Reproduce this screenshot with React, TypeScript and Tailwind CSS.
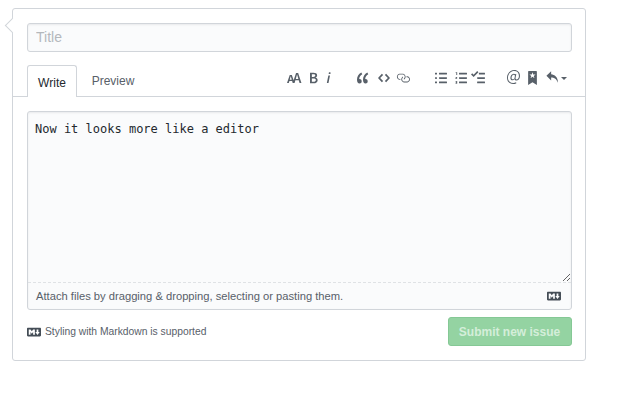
import React from "react";

const I = ({ d, vb, w, h, c = "#586069", stretch = false }: { d: string; vb: string; w: number; h: number; c?: string; stretch?: boolean }) => (
  <svg width={w} height={h} viewBox={vb} fill={c} className="shrink-0" preserveAspectRatio={stretch ? "none" : undefined}>
    <path fillRule="evenodd" d={d} />
  </svg>
);

const md = "M14.85 3H1.15C.52 3 0 3.52 0 4.15v7.69C0 12.48.52 13 1.15 13h13.69c.64 0 1.15-.52 1.15-1.15v-7.7C16 3.52 15.48 3 14.85 3zM9 11H7V8L5.5 9.92 4 8v3H2V5h2l1.5 2L7 5h2v6zm2.99.5L9.5 8H11V5h2v3h1.5l-2.51 3.5z";

export default function App() {
  return (
    <div className="bg-white w-[640px] h-[400px] pt-2 pl-3 font-['Liberation_Sans',Arial,sans-serif]">
      <div className="relative w-[574px] h-[353px] bg-white border border-[#d1d5da] rounded-[3px] flex flex-col">
        <div className="absolute left-[-6px] top-[11px] w-[11px] h-[11px] rotate-45 bg-white border-l border-b border-[#d1d5da]" />
        <div className="relative pl-[14px] pr-[13px] pt-[14px]">
          <input
            placeholder="Title"
            className="w-full h-[29px] px-2 pb-[2px] text-sm leading-5 bg-[#fafbfc] border border-[#d1d5da] rounded-[3px] text-[#24292e] placeholder:text-[#b4b8bc] outline-none shadow-[inset_0_1px_2px_rgba(27,31,35,0.075)]"
          />
        </div>
        <div className="relative mt-[13px] h-[32px] pl-[14px] flex items-end border-b border-[#d1d5da]">
          <div className="shrink-0 w-[50px] h-[32px] mb-[-1px] pt-[2px] bg-white border border-[#d1d5da] border-b-0 rounded-t-[3px] flex items-center justify-center text-[12px] text-[#24292e] z-10">
            Write
          </div>
          <div className="shrink-0 w-[72px] h-[32px] pt-[2px] flex items-center justify-center text-[12px] text-[#586069]">
            Preview
          </div>
          <div className="flex items-center h-[32px] pb-[5px] ml-[138px]">
            <I w={15} h={14} vb="0 0 18 16" d="M13.62 9.08L12.1 3.66h-.06l-1.5 5.42h3.08zM5.7 10.13S4.68 6.52 4.53 6.02h-.08l-1.13 4.11H5.7zM17.31 14h-2.25l-.95-3.25h-4.07L9.09 14H6.84l-.69-2.33H2.87L2.17 14H0l3.3-9.59h2.5l2.17 6.34L10.86 2h2.52l3.94 12h-.01z" />
            <div className="w-[7px]" />
            <I w={9} h={14} vb="0 0 10 16" d="M1 2h3.83c2.48 0 4.3.75 4.3 2.95 0 1.14-.63 2.23-1.67 2.61v.06c1.33.3 2.3 1.23 2.3 2.86 0 2.39-1.97 3.52-4.61 3.52H1V2zm3.66 4.95c1.67 0 2.38-.66 2.38-1.69 0-1.17-.78-1.61-2.34-1.61H3.13v3.3h1.53zm.27 5.39c1.77 0 2.75-.64 2.75-1.98 0-1.27-.95-1.81-2.75-1.81h-1.8v3.8h1.8v-.01z" />
            <div className="w-[8px]" />
            <I w={5} h={14} vb="0 0 6 16" d="M2.81 5h1.98L3 14H1l1.81-9zm.36-2.7c0-.7.58-1.3 1.33-1.3.56 0 1.13.38 1.13 1.03 0 .75-.59 1.3-1.33 1.3-.58 0-1.13-.38-1.13-1.03z" />
            <div className="w-[26px]" />
            <I w={12} h={14} vb="0 0 14 16" d="M6.16 3.5C3.73 5.06 2.55 6.67 2.55 9.36c.16-.05.3-.05.44-.05 1.27 0 2.5.86 2.5 2.41 0 1.61-1.03 2.61-2.5 2.61-1.9 0-2.99-1.52-2.99-4.25 0-3.8 1.75-6.53 5.02-8.42L6.16 3.5zm7 0c-2.43 1.56-3.61 3.17-3.61 5.86.16-.05.3-.05.44-.05 1.27 0 2.5.86 2.5 2.41 0 1.61-1.03 2.61-2.5 2.61-1.89 0-2.98-1.52-2.98-4.25 0-3.8 1.75-6.53 5.02-8.42l1.14 1.84h-.01z" />
            <div className="w-[9px]" />
            <I w={12} h={14} vb="0 0 14 16" d="M9.5 3L8 4.5 11.5 8 8 11.5 9.5 13 14 8 9.5 3zm-5 0L0 8l4.5 5L6 11.5 2.5 8 6 4.5 4.5 3z" />
            <div className="w-[6px]" />
            <I w={14} h={14} vb="0 0 16 16" d="M4 9h1v1H4c-1.5 0-3-1.69-3-3.5S2.55 3 4 3h4c1.45 0 3 1.69 3 3.5 0 1.41-.91 2.72-2 3.25V8.59c.58-.45 1-1.27 1-2.09C10 5.22 8.98 4 8 4H4c-.98 0-2 1.22-2 2.5S3 9 4 9zm9-3h-1v1h1c1 0 2 1.22 2 2.5S13.98 12 13 12H9c-.98 0-2-1.22-2-2.5 0-.83.42-1.64 1-2.09V6.25c-1.09.53-2 1.84-2 3.25C6 11.31 7.55 13 9 13h4c1.45 0 3-1.69 3-3.5S14.5 6 13 6z" />
            <div className="w-[25px]" />
            <I stretch w={12} h={14} vb="0 0 12 16" d="M2 13c0 .59 0 1-.59 1H.59C0 14 0 13.59 0 13c0-.59 0-1 .59-1h.81c.59 0 .59.41.59 1H2zm2.59-9h6.81c.59 0 .59-.41.59-1 0-.59 0-1-.59-1H4.59C4 2 4 2.41 4 3c0 .59 0 1 .59 1zM1.41 7H.59C0 7 0 7.41 0 8c0 .59 0 1 .59 1h.81c.59 0 .59-.41.59-1 0-.59 0-1-.59-1h.01zm0-5H.59C0 2 0 2.41 0 3c0 .59 0 1 .59 1h.81c.59 0 .59-.41.59-1 0-.59 0-1-.59-1h.01zm10 5H4.59C4 7 4 7.41 4 8c0 .59 0 1 .59 1h6.81c.59 0 .59-.41.59-1 0-.59 0-1-.59-1h.01zm0 5H4.59C4 12 4 12.41 4 13c0 .59 0 1 .59 1h6.81c.59 0 .59-.41.59-1 0-.59 0-1-.59-1h.01z" />
            <div className="w-[8px]" />
            <I stretch w={12} h={14} vb="0 0 12 16" d="M12 13c0 .59 0 1-.59 1H4.6c-.59 0-.59-.41-.59-1s0-1 .59-1h6.81c.59 0 .59.41.59 1zM4.6 4h6.81C12 4 12 3.59 12 3s0-1-.59-1H4.6c-.59 0-.59.41-.59 1s0 1 .59 1zm6.81 3H4.6c-.59 0-.59.41-.59 1s0 1 .59 1h6.81C12 9 12 8.59 12 8s0-1-.59-1zM2.2 4.6V1.4H1.3L.4 1.9v.5h.9v2.2h.9zM.4 6.8h1.8v.8L1.2 8.6h1v.6H.4v-.7l1-1.1h-1v-.6zm0 4.5h1.8v3.4H.4v-.6h.9v-.8H.7v-.6h.6v-.8H.4v-.6z" />
            <div className="w-[4px]" />
            <I w={14} h={14} vb="0 0 16 16" d="M15.41 9H7.59C7 9 7 8.59 7 8c0-.59 0-1 .59-1h7.81c.59 0 .59.41.59 1s0 1-.59 1zM9.59 4C9 4 9 3.59 9 3c0-.59 0-1 .59-1h5.81c.59 0 .59.41.59 1 0 .59 0 1-.59 1H9.59zM0 3.91l1.41-1.3L3 4.2 7.09 0 8.5 1.41 3 6.91l-3-3zM7.59 12h7.81c.59 0 .59.41.59 1s0 1-.59 1H7.59C7 14 7 13.59 7 13c0-.59 0-1 .59-1z" />
            <div className="w-[22px]" />
            <I w={13} h={15} vb="0 0 14 16" d="M6.58 15c1.25 0 2.52-.31 3.56-.94l-.42-.94c-.84.52-1.89.83-3.03.83-3.23 0-5.64-2.08-5.64-5.72 0-4.37 3.23-7.18 6.58-7.18 3.45 0 5.22 2.19 5.22 5.2 0 2.39-1.34 3.86-2.5 3.86-1.05 0-1.36-.73-1.05-2.19l.73-3.75H8.98l-.11.72c-.41-.63-.94-.83-1.56-.83-2.19 0-3.66 2.39-3.66 4.38 0 1.67.94 2.61 2.3 2.61.84 0 1.67-.53 2.3-1.25.11.94.94 1.45 1.98 1.45 1.67 0 3.77-1.67 3.77-5C14 2.61 11.59 0 7.83 0 3.66 0 0 3.33 0 8.33 0 12.71 2.92 15 6.58 15zm-.31-5c-.73 0-1.36-.52-1.36-1.67 0-1.45.94-3.22 2.41-3.22.52 0 .84.2 1.25.83l-.52 3.02c-.63.73-1.25 1.04-1.78 1.04z" />
            <div className="w-[8px]" />
            <I w={9} h={14} vb="0 0 10 16" d="M9 0H1C.27 0 0 .27 0 1v15l5-3.09L10 16V1c0-.73-.27-1-1-1zm-.78 4.25L6.36 5.61l.72 2.16c.06.22-.02.28-.2.17L5 6.6 3.12 7.94c-.19.11-.25.05-.2-.17l.72-2.16-1.86-1.36c-.17-.16-.14-.23.09-.23l2.3-.03.7-2.16h.25l.7 2.16 2.3.03c.23 0 .27.08.09.23h.01z" />
            <div className="w-[9px]" />
            <I w={12} h={14} vb="0 0 14 16" d="M6 3.5c3.92.44 8 3.125 8 10-2.312-5.062-4.75-6-8-6V11L.5 5.5 6 0v3.5z" />
            <div className="w-[3px]" />
            <div className="w-0 h-0 mt-[2px] border-x-[3px] border-x-transparent border-t-[3px] border-t-[#586069]" />
          </div>
        </div>
        <div className="relative ml-[14px] mr-[13px] mt-[14px] h-[199px] bg-[#fafbfc] border border-[#d1d5da] rounded-[3px] flex flex-col shadow-[inset_0_1px_2px_rgba(27,31,35,0.075)]">
          <textarea
            defaultValue="Now it looks more like a editor"
            className="block w-full h-[171px] resize-y px-[7px] py-2 bg-transparent outline-none text-[12px] leading-[18px] text-[#24292e] border-b border-dashed border-[#dfe2e5] font-['DejaVu_Sans_Mono',monospace]"
          />
          <div className="flex-1 flex items-center justify-between pl-2 pr-[10px] text-[11.2px] text-[#586069]">
            <span>Attach files by dragging &amp; dropping, selecting or pasting them.</span>
            <I w={14} h={14} vb="0 0 16 16" c="#444d56" d={md} />
          </div>
        </div>
        <div className="ml-[14px] mr-[13px] mt-[7px] flex items-center justify-between">
          <div className="flex items-center text-[10.3px] text-[#586069]">
            <I w={14} h={14} vb="0 0 16 16" c="#444d56" d={md} />
            <span className="ml-[4px]">Styling with Markdown is supported</span>
          </div>
          <div className="w-[124px] h-[29px] pr-[1px] flex items-center justify-center rounded-[3px] bg-[#94d3a2] border border-[#85c895] text-[12px] font-bold text-[#d4eeda]">
            Submit new issue
          </div>
        </div>
      </div>
    </div>
  );
}
